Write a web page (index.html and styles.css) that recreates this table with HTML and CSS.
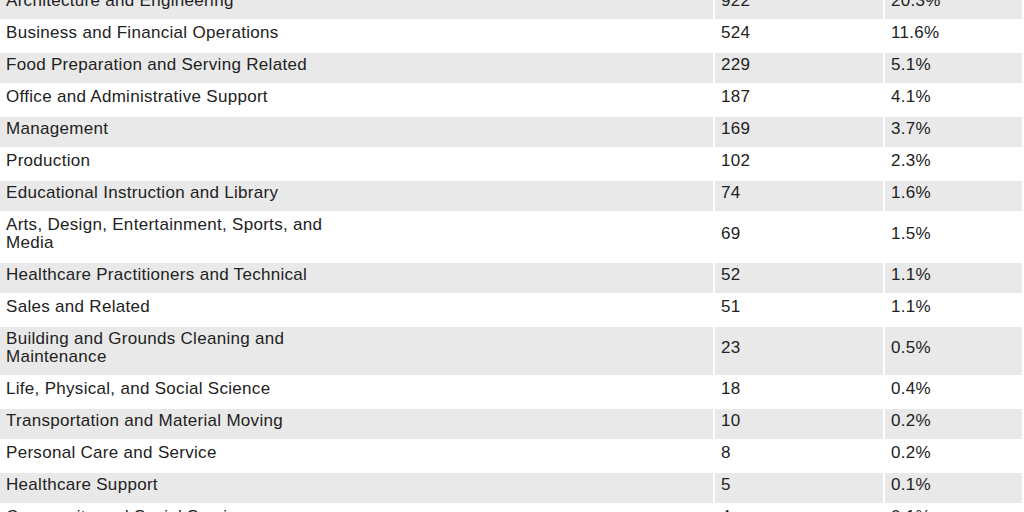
FILE: index.html
```html
<!DOCTYPE html>
<html lang="en">
<head>
<meta charset="utf-8">
<title>Occupations</title>
<link rel="stylesheet" href="styles.css">
</head>
<body>
<table class="occ">
  <colgroup><col class="c-name"><col class="c-num"><col class="c-pct"></colgroup>
  <tbody>
    <tr class="alt"><td><span class="label">Architecture and Engineering</span></td><td>922</td><td>20.3%</td></tr>
    <tr><td><span class="label">Business and Financial Operations</span></td><td>524</td><td>11.6%</td></tr>
    <tr class="alt"><td><span class="label">Food Preparation and Serving Related</span></td><td>229</td><td>5.1%</td></tr>
    <tr><td><span class="label">Office and Administrative Support</span></td><td>187</td><td>4.1%</td></tr>
    <tr class="alt"><td><span class="label">Management</span></td><td>169</td><td>3.7%</td></tr>
    <tr><td><span class="label">Production</span></td><td>102</td><td>2.3%</td></tr>
    <tr class="alt"><td><span class="label">Educational Instruction and Library</span></td><td>74</td><td>1.6%</td></tr>
    <tr><td><span class="label">Arts, Design, Entertainment, Sports, and Media</span></td><td>69</td><td>1.5%</td></tr>
    <tr class="alt"><td><span class="label">Healthcare Practitioners and Technical</span></td><td>52</td><td>1.1%</td></tr>
    <tr><td><span class="label">Sales and Related</span></td><td>51</td><td>1.1%</td></tr>
    <tr class="alt"><td><span class="label">Building and Grounds Cleaning and Maintenance</span></td><td>23</td><td>0.5%</td></tr>
    <tr><td><span class="label">Life, Physical, and Social Science</span></td><td>18</td><td>0.4%</td></tr>
    <tr class="alt"><td><span class="label">Transportation and Material Moving</span></td><td>10</td><td>0.2%</td></tr>
    <tr><td><span class="label">Personal Care and Service</span></td><td>8</td><td>0.2%</td></tr>
    <tr class="alt"><td><span class="label">Healthcare Support</span></td><td>5</td><td>0.1%</td></tr>
    <tr><td><span class="label">Community and Social Service</span></td><td>4</td><td>0.1%</td></tr>
  </tbody>
</table>
</body>
</html>
```
FILE: styles.css
```css
html, body {
  margin: 0;
  padding: 0;
  overflow: hidden;
  background: #fff;
}
body {
  font-family: "Liberation Sans", Arial, sans-serif;
  font-size: 17px;
  letter-spacing: 0.3px;
  color: #222;
}
.occ {
  table-layout: fixed;
  width: 1026px;
  border-collapse: separate;
  border-spacing: 2px;
  margin: -13px 0 0 -2px;
}
.c-name { width: 713px; }
.c-num { width: 168px; }
.c-pct { width: 137px; }
.occ td {
  padding: 3px 6px 9px;
  line-height: 18px;
  vertical-align: middle;
  text-align: left;
}
.occ .alt td {
  background: #e9e9e9;
}
.label {
  display: block;
  max-width: 345px;
}
```
